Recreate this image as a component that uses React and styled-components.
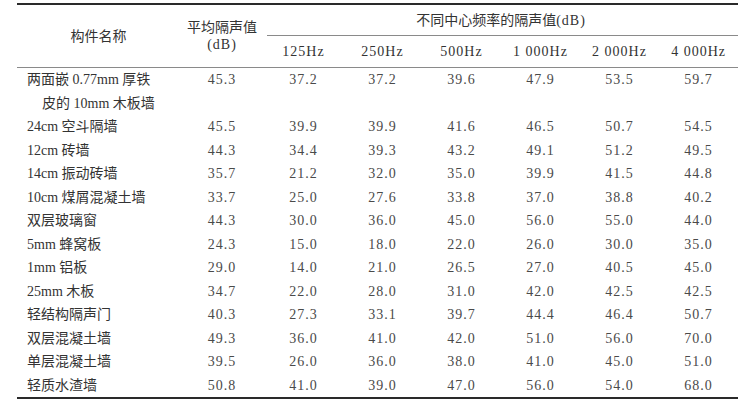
import React from "react";
import styled, { createGlobalStyle } from "styled-components";

const Global = createGlobalStyle`
  html, body { margin: 0; padding: 0; background: #fff; }
  body { font-family: "Liberation Serif", "Noto Sans CJK SC", serif; color: #333; }
`;

const Page = styled.div`
  padding: 3px 18px 0 17px;
`;

const Table = styled.table`
  width: 721px;
  border-collapse: collapse;
  table-layout: fixed;
  font-size: 14px;
  border-top: 2px solid #2a2a2a;
  border-bottom: 2px solid #2a2a2a;
`;

const HeadCell = styled.th`
  font-weight: 400;
  text-align: center;
  vertical-align: middle;
  padding: 0;
  height: ${(p) => p.$h || 31}px;
  line-height: 17px;
  color: #333;
  letter-spacing: ${(p) => (p.$spaced ? "1px" : "0")};
  border-bottom: ${(p) => (p.$bottom ? "1px solid #8a8a8a" : "none")};
`;

const GroupHead = styled(HeadCell)`
  border-bottom: none;
  background-image: linear-gradient(#8a8a8a, #8a8a8a);
  background-size: calc(100% - 3px) 1px;
  background-position: right bottom;
  background-repeat: no-repeat;
`;

const Unit = styled.span`
  letter-spacing: 1px;
`;

const NameCell = styled.td`
  text-align: left;
  padding: 0 0 0 10px;
  line-height: 23.5px;
  vertical-align: top;
  white-space: nowrap;
  color: #333;
`;

const ValueCell = styled.td`
  text-align: center;
  padding: 0;
  line-height: 23.5px;
  vertical-align: top;
  color: #4a4a4a;
  letter-spacing: 1px;
`;

const Continued = styled.span`
  display: block;
  padding-left: 15px;
`;

const freqs = ["125Hz", "250Hz", "500Hz", "1 000Hz", "2 000Hz", "4 000Hz"];

const rows = [
  { name: ["两面嵌 0.77mm 厚铁", "皮的 10mm 木板墙"], avg: "45.3", v: ["37.2", "37.2", "39.6", "47.9", "53.5", "59.7"] },
  { name: ["24cm 空斗隔墙"], avg: "45.5", v: ["39.9", "39.9", "41.6", "46.5", "50.7", "54.5"] },
  { name: ["12cm 砖墙"], avg: "44.3", v: ["34.4", "39.3", "43.2", "49.1", "51.2", "49.5"] },
  { name: ["14cm 振动砖墙"], avg: "35.7", v: ["21.2", "32.0", "35.0", "39.9", "41.5", "44.8"] },
  { name: ["10cm 煤屑混凝土墙"], avg: "33.7", v: ["25.0", "27.6", "33.8", "37.0", "38.8", "40.2"] },
  { name: ["双层玻璃窗"], avg: "44.3", v: ["30.0", "36.0", "45.0", "56.0", "55.0", "44.0"] },
  { name: ["5mm 蜂窝板"], avg: "24.3", v: ["15.0", "18.0", "22.0", "26.0", "30.0", "35.0"] },
  { name: ["1mm 铝板"], avg: "29.0", v: ["14.0", "21.0", "26.5", "27.0", "40.5", "45.0"] },
  { name: ["25mm 木板"], avg: "34.7", v: ["22.0", "28.0", "31.0", "42.0", "42.5", "42.5"] },
  { name: ["轻结构隔声门"], avg: "40.3", v: ["27.3", "33.1", "39.7", "44.4", "46.4", "50.7"] },
  { name: ["双层混凝土墙"], avg: "49.3", v: ["36.0", "41.0", "42.0", "51.0", "56.0", "70.0"] },
  { name: ["单层混凝土墙"], avg: "39.5", v: ["26.0", "36.0", "38.0", "41.0", "45.0", "51.0"] },
  { name: ["轻质水渣墙"], avg: "50.8", v: ["41.0", "39.0", "47.0", "56.0", "54.0", "68.0"] },
];

export default function App() {
  return (
    <Page>
      <Global />
      <Table>
        <colgroup>
          <col style={{ width: 163 }} />
          <col style={{ width: 84 }} />
          {freqs.map((f) => (
            <col key={f} style={{ width: 79 }} />
          ))}
        </colgroup>
        <thead>
          <tr>
            <HeadCell rowSpan={2} $bottom $h={62}>构件名称</HeadCell>
            <HeadCell rowSpan={2} $bottom $h={62}>
              平均隔声值
              <br />
              <Unit>(dB)</Unit>
            </HeadCell>
            <GroupHead colSpan={6}>
              不同中心频率的隔声值<Unit>(dB)</Unit>
            </GroupHead>
          </tr>
          <tr>
            {freqs.map((f) => (
              <HeadCell key={f} $bottom $spaced>{f}</HeadCell>
            ))}
          </tr>
        </thead>
        <tbody>
          {rows.map((r, i) => (
            <tr key={i}>
              <NameCell>
                {r.name[0]}
                {r.name[1] && <Continued>{r.name[1]}</Continued>}
              </NameCell>
              <ValueCell>{r.avg}</ValueCell>
              {r.v.map((x, j) => (
                <ValueCell key={j}>{x}</ValueCell>
              ))}
            </tr>
          ))}
        </tbody>
      </Table>
    </Page>
  );
}
